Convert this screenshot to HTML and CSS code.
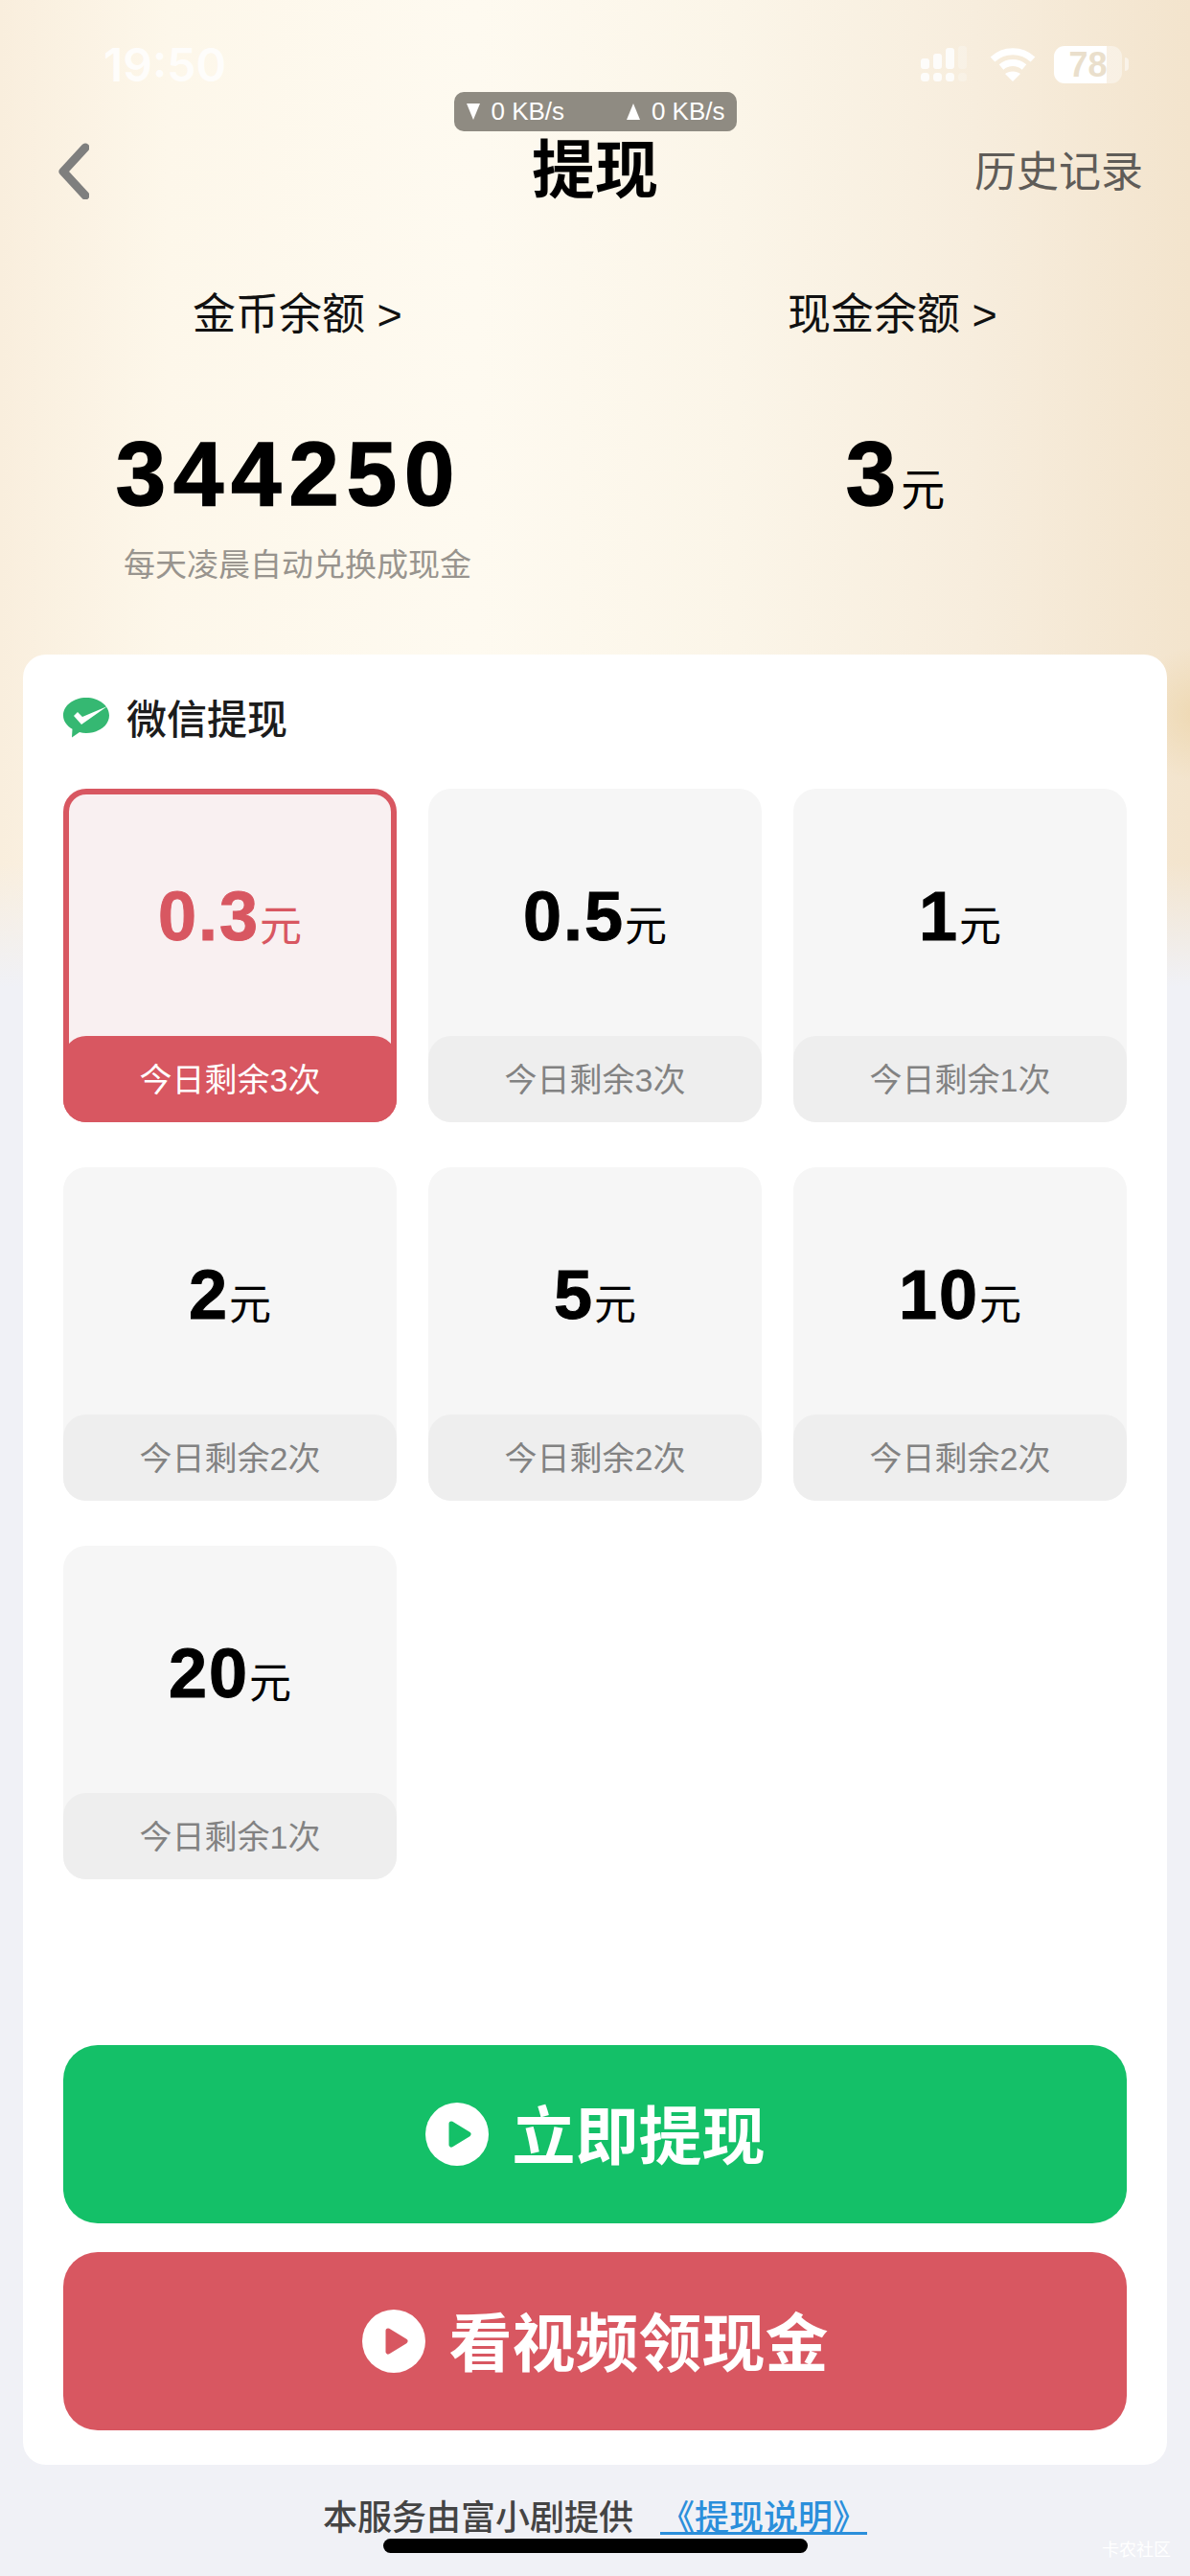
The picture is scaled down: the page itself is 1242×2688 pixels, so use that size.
FILE: index.html
```html
<!DOCTYPE html>
<html lang="zh-CN">

<head>
    <meta charset="UTF-8">
    <meta name="viewport" content="width=device-width, initial-scale=1.0">
    <title>提现</title>
    <link rel="stylesheet" href="styles.css">
</head>

<body>
    <!-- Status bar -->
    <div class="statusBar">
        <span class="time">19:50</span>
        <div class="statusIcons">
            <svg class="signalIcon" width="52" height="38" viewBox="0 0 52 38" fill="#fff">
                <rect x="0" y="13" width="9" height="11" rx="3" />
                <rect x="13" y="8" width="9" height="16" rx="3" />
                <rect x="26" y="2" width="9" height="22" rx="3" />
                <rect x="39" y="0" width="9" height="24" rx="3" opacity="0.3" />
                <rect x="0" y="28" width="9" height="9" rx="3.5" />
                <rect x="13" y="28" width="9" height="9" rx="3.5" />
                <rect x="26" y="28" width="9" height="9" rx="3.5" />
                <rect x="39" y="28" width="9" height="9" rx="3.5" opacity="0.3" />
            </svg>
            <svg class="wifiIcon" width="48" height="36" viewBox="0 0 48 36" fill="none" stroke="#fff" stroke-width="7">
                <path d="M3 13 C15 2 33 2 45 13" />
                <path d="M12 21 C19 15 29 15 36 21" />
                <path d="M24 36 L16 28 C20 24.500 28 24.500 32 28 Z" fill="#fff" stroke="none" />
            </svg>
            <div class="battery">
                <div class="batteryBody"><span>78</span></div>
                <div class="batteryNub"></div>
            </div>
        </div>
    </div>

    <!-- Network speed pill -->
    <div class="netPill">
        <span class="netSpeed"><i class="triDown"></i>0 KB/s</span>
        <span class="netSpeed"><i class="triUp"></i>0 KB/s</span>
    </div>

    <!-- Nav bar -->
    <div class="navBar">
        <svg class="backIcon" width="36" height="60" viewBox="0 0 36 60" fill="none" stroke="#7f7f7e" stroke-width="9" stroke-linecap="round" stroke-linejoin="round">
            <path d="M32 6 L9 31 L32 56" />
        </svg>
        <h1 class="navTitle">提现</h1>
        <span class="navLink">历史记录</span>
    </div>

    <!-- Balances -->
    <div class="balances">
        <div class="balanceCol">
            <div class="balanceLabel">金币余额 &gt;</div>
            <div class="balanceValue coins">344250</div>
            <div class="balanceNote">每天凌晨自动兑换成现金</div>
        </div>
        <div class="balanceCol">
            <div class="balanceLabel">现金余额 &gt;</div>
            <div class="balanceValue cash">3<span class="balanceUnit">元</span></div>
        </div>
    </div>

    <!-- Withdraw card -->
    <div class="card">
        <div class="cardTitle">
            <svg class="wechatIcon" width="48" height="42" viewBox="0 0 48 42">
                <path d="M24 0 C37.300 0 48 8.200 48 18.500 C48 28.800 37.300 37 24 37 C21.500 37 19.200 36.700 17 36.100 L9 41.500 L9.500 32.800 C3.700 29.400 0 24.300 0 18.500 C0 8.200 10.700 0 24 0 Z" fill="#35b872" />
                <path d="M11 19 L15 15 L20 20 L46 9 L19 28 Z" fill="#fff" />
            </svg>
            <span>微信提现</span>
        </div>

        <div class="amountGrid">
            <div class="amountTile selected">
                <div class="amountValue">0.3<span class="amountUnit">元</span></div>
                <div class="amountLeft">今日剩余3次</div>
            </div>
            <div class="amountTile">
                <div class="amountValue">0.5<span class="amountUnit">元</span></div>
                <div class="amountLeft">今日剩余3次</div>
            </div>
            <div class="amountTile">
                <div class="amountValue">1<span class="amountUnit">元</span></div>
                <div class="amountLeft">今日剩余1次</div>
            </div>
            <div class="amountTile">
                <div class="amountValue">2<span class="amountUnit">元</span></div>
                <div class="amountLeft">今日剩余2次</div>
            </div>
            <div class="amountTile">
                <div class="amountValue">5<span class="amountUnit">元</span></div>
                <div class="amountLeft">今日剩余2次</div>
            </div>
            <div class="amountTile">
                <div class="amountValue">10<span class="amountUnit">元</span></div>
                <div class="amountLeft">今日剩余2次</div>
            </div>
            <div class="amountTile">
                <div class="amountValue">20<span class="amountUnit">元</span></div>
                <div class="amountLeft">今日剩余1次</div>
            </div>
        </div>

        <div class="actions">
            <button class="actionButton green">
                <svg width="66" height="66" viewBox="0 0 66 66">
                    <circle cx="33" cy="33" r="33" fill="#fff" />
                    <path d="M27 22 L45 33 L27 44 Z" fill="#14c068" stroke="#14c068" stroke-width="5" stroke-linejoin="round" />
                </svg>
                <span class="actionText">立即提现</span>
            </button>
            <button class="actionButton red">
                <svg width="66" height="66" viewBox="0 0 66 66">
                    <circle cx="33" cy="33" r="33" fill="#fff" />
                    <path d="M27 22 L45 33 L27 44 Z" fill="#d85761" stroke="#d85761" stroke-width="5" stroke-linejoin="round" />
                </svg>
                <span class="actionText">看视频领现金</span>
            </button>
        </div>
    </div>

    <!-- Footer -->
    <p class="footerText">本服务由富小剧提供<a class="footerLink" href="#">《提现说明》</a></p>
    <div class="homeBar"></div>
    <span class="watermark">卡农社区</span>
</body>

</html>
```

FILE: styles.css
```css
* {
    box-sizing: border-box;
}

body {
    margin: 0;
    position: relative;
    width: 1242px;
    height: 2688px;
    overflow: hidden;
    font-family: "Liberation Sans", "Noto Sans CJK SC", sans-serif;
    background-color: #f0f1f6;
    background-image:
        linear-gradient(180deg, rgba(240, 241, 246, 0) 0, rgba(240, 241, 246, 0) 900px, #f0f1f6 1030px),
        radial-gradient(circle at 1250px 745px, rgba(236, 212, 168, 0.7) 0, rgba(236, 212, 168, 0) 70px),
        linear-gradient(90deg, #f9eedd 0, #fdf7ea 14%, #fefaf0 40%, #fbf5e8 62%, #f7eddd 82%, #f3e4cd 100%);
    background-repeat: no-repeat;
}

/* status bar */
.statusBar {
    display: flex;
    justify-content: space-between;
    align-items: center;
    height: 96px;
    padding: 0 64px 0 108px;
    color: rgba(255, 255, 255, 0.85);
}

.time {
    font-family: Inter, "Liberation Sans", sans-serif;
    font-size: 48px;
    font-weight: 600;
    line-height: 40px;
    margin-top: 40px;
}

.statusIcons {
    display: flex;
    align-items: center;
    margin-top: 38px;
}

.signalIcon {
    margin-right: 20px;
    opacity: 0.85;
}

.wifiIcon {
    margin-right: 19px;
}

.battery {
    display: flex;
    align-items: center;
}

.batteryBody {
    width: 71px;
    height: 39px;
    border-radius: 11px;
    background: linear-gradient(90deg, #fff 0, #fff 78%, rgba(255, 255, 255, 0.4) 78%);
    color: #eadfcc;
    font-size: 36px;
    font-weight: 700;
    line-height: 39px;
    text-align: center;
}

.batteryNub {
    width: 4px;
    height: 14px;
    margin-left: 3px;
    border-radius: 0 4px 4px 0;
    background: rgba(255, 255, 255, 0.5);
}

/* network speed */
.netPill {
    display: flex;
    justify-content: space-between;
    width: 295px;
    height: 41px;
    margin: 0 auto;
    padding: 0 12px 0 13px;
    border-radius: 10px;
    background: #8f8b82;
    color: #fff;
    font-size: 26px;
    line-height: 41px;
}

.netSpeed {
    display: flex;
    align-items: center;
}

.triDown,
.triUp {
    width: 0;
    height: 0;
    margin-right: 12px;
    border-left: 7px solid transparent;
    border-right: 7px solid transparent;
}

.triDown {
    border-top: 17px solid #fff;
}

.triUp {
    border-bottom: 17px solid #fff;
}

/* nav */
.navBar {
    display: flex;
    justify-content: space-between;
    align-items: center;
    position: relative;
    height: 80px;
    margin-top: 1px;
    padding: 0 49px 0 57px;
}

.backIcon {
    display: block;
}

.navTitle {
    position: absolute;
    left: 0;
    right: 0;
    margin: 0;
    color: #000;
    font-size: 66px;
    font-weight: 700;
    line-height: 80px;
    text-align: center;
}

.navLink {
    margin-top: 3px;
    color: #5f5c58;
    font-size: 44px;
    line-height: 60px;
}

/* balances */
.balances {
    display: grid;
    grid-template-columns: 1fr 1fr;
    height: 465px;
    padding-top: 81px;
}

.balanceCol {
    display: flex;
    flex-direction: column;
    align-items: center;
}

.balanceLabel {
    color: #111;
    font-size: 45px;
    line-height: 60px;
}

.balanceValue {
    margin-top: 86px;
    color: #000;
    font-size: 94px;
    font-weight: 700;
    line-height: 100px;
    -webkit-text-stroke: 1.5px #000;
}

.balanceValue.coins {
    margin-left: -18px;
    letter-spacing: 8px;
}

.balanceValue.cash {
    margin-left: 6px;
    letter-spacing: 5px;
}

.balanceUnit {
    font-size: 46px;
    font-weight: 400;
    letter-spacing: 0;
    -webkit-text-stroke: 0;
}

.balanceNote {
    margin-top: 20px;
    color: #98948e;
    font-size: 33px;
    line-height: 50px;
}

/* card */
.card {
    width: 1194px;
    height: 1889px;
    margin: 0 auto;
    padding: 0 42px;
    border-radius: 24px;
    background: #fff;
}

.cardTitle {
    display: flex;
    align-items: center;
    height: 140px;
    padding-bottom: 12px;
    color: #1c1c1c;
    font-size: 42px;
    font-weight: 500;
}

.wechatIcon {
    margin-top: 4px;
    margin-right: 18px;
}

.amountGrid {
    display: grid;
    grid-template-columns: repeat(3, 348px);
    grid-auto-rows: 348px;
    gap: 47px 33px;
    height: 1311px;
}

.amountTile {
    display: flex;
    flex-direction: column;
    border-radius: 24px;
    background: #f6f6f6;
    overflow: hidden;
}

.amountValue {
    flex: 1;
    display: flex;
    justify-content: center;
    align-items: center;
    padding-top: 8px;
    color: #000;
    font-size: 72px;
    font-weight: 700;
    letter-spacing: 2px;
    -webkit-text-stroke: 1px currentColor;
}

.amountUnit {
    margin-top: 14px;
    font-size: 44px;
    font-weight: 400;
    letter-spacing: 0;
    -webkit-text-stroke: 0;
}

.amountLeft {
    height: 90px;
    border-radius: 24px 24px 0 0;
    background: #eeeeee;
    color: #828282;
    font-size: 34px;
    line-height: 92px;
    text-align: center;
}

.amountTile.selected {
    background: #f9f0f1;
    box-shadow: inset 0 0 0 6px #d85761;
}

.selected .amountValue {
    color: #d85761;
}

.selected .amountLeft {
    background: #d85761;
    color: #fff;
}

/* buttons */
.actions {
    display: flex;
    flex-direction: column;
    gap: 30px;
}

.actionButton {
    display: flex;
    justify-content: center;
    align-items: center;
    gap: 25px;
    width: 100%;
    height: 186px;
    border: none;
    border-radius: 36px;
    color: #fff;
    font-family: inherit;
    font-size: 66px;
    font-weight: 700;
}

.actionText {
    margin-top: -6px;
}

.green {
    background-color: #14c068;
}

.red {
    background-color: #d85761;
}

/* footer */
.footerText {
    margin: 31px 0 0;
    color: #444;
    font-size: 36px;
    font-weight: 500;
    line-height: 50px;
    text-align: center;
}

.footerLink {
    margin-left: 28px;
    color: #2b8fdb;
    text-decoration: underline;
}

.homeBar {
    position: absolute;
    left: 400px;
    top: 2649px;
    width: 443px;
    height: 15px;
    border-radius: 8px;
    background: #000;
}

.watermark {
    position: absolute;
    right: 20px;
    top: 2646px;
    color: #fff;
    font-size: 18px;
}
```
